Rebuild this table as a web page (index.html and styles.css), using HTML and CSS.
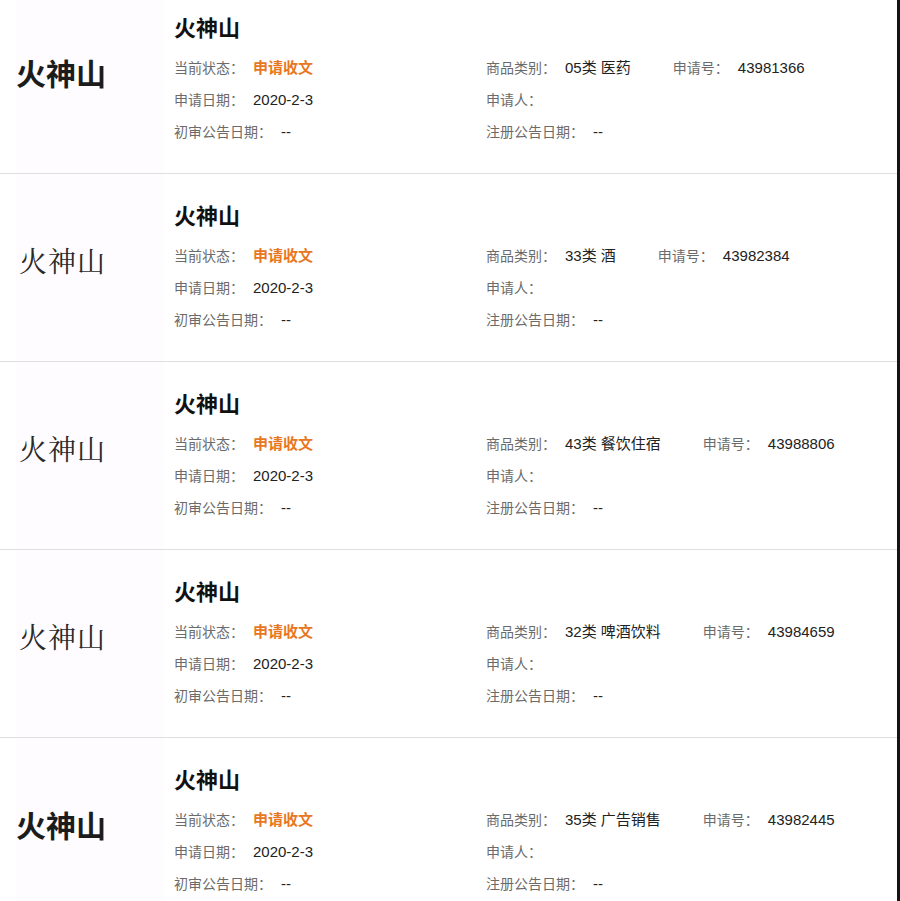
FILE: index.html
```html
<!DOCTYPE html>
<html lang="zh-CN">
<head>
<meta charset="utf-8">
<title>火神山 商标</title>
<link rel="stylesheet" href="styles.css">
</head>
<body>
<div class="list">
  <div class="item">
    <div class="logo"><span class="logo-text sans">火神山</span></div>
    <div class="info">
      <div class="title">火神山</div>
      <div class="grid">
        <div class="line"><span class="label">当前状态：</span><span class="val status">申请收文</span></div>
        <div class="line"><span class="label">商品类别：</span><span class="val cat">05类 医药</span><span class="label">申请号：</span><span class="val">43981366</span></div>
        <div class="line"><span class="label">申请日期：</span><span class="val">2020-2-3</span></div>
        <div class="line"><span class="label">申请人：</span></div>
        <div class="line"><span class="label">初审公告日期：</span><span class="val">--</span></div>
        <div class="line"><span class="label">注册公告日期：</span><span class="val">--</span></div>
      </div>
    </div>
  </div>
  <div class="item">
    <div class="logo"><span class="logo-text serif">火神山</span></div>
    <div class="info">
      <div class="title">火神山</div>
      <div class="grid">
        <div class="line"><span class="label">当前状态：</span><span class="val status">申请收文</span></div>
        <div class="line"><span class="label">商品类别：</span><span class="val cat">33类 酒</span><span class="label">申请号：</span><span class="val">43982384</span></div>
        <div class="line"><span class="label">申请日期：</span><span class="val">2020-2-3</span></div>
        <div class="line"><span class="label">申请人：</span></div>
        <div class="line"><span class="label">初审公告日期：</span><span class="val">--</span></div>
        <div class="line"><span class="label">注册公告日期：</span><span class="val">--</span></div>
      </div>
    </div>
  </div>
  <div class="item">
    <div class="logo"><span class="logo-text serif">火神山</span></div>
    <div class="info">
      <div class="title">火神山</div>
      <div class="grid">
        <div class="line"><span class="label">当前状态：</span><span class="val status">申请收文</span></div>
        <div class="line"><span class="label">商品类别：</span><span class="val cat">43类 餐饮住宿</span><span class="label">申请号：</span><span class="val">43988806</span></div>
        <div class="line"><span class="label">申请日期：</span><span class="val">2020-2-3</span></div>
        <div class="line"><span class="label">申请人：</span></div>
        <div class="line"><span class="label">初审公告日期：</span><span class="val">--</span></div>
        <div class="line"><span class="label">注册公告日期：</span><span class="val">--</span></div>
      </div>
    </div>
  </div>
  <div class="item">
    <div class="logo"><span class="logo-text serif">火神山</span></div>
    <div class="info">
      <div class="title">火神山</div>
      <div class="grid">
        <div class="line"><span class="label">当前状态：</span><span class="val status">申请收文</span></div>
        <div class="line"><span class="label">商品类别：</span><span class="val cat">32类 啤酒饮料</span><span class="label">申请号：</span><span class="val">43984659</span></div>
        <div class="line"><span class="label">申请日期：</span><span class="val">2020-2-3</span></div>
        <div class="line"><span class="label">申请人：</span></div>
        <div class="line"><span class="label">初审公告日期：</span><span class="val">--</span></div>
        <div class="line"><span class="label">注册公告日期：</span><span class="val">--</span></div>
      </div>
    </div>
  </div>
  <div class="item">
    <div class="logo"><span class="logo-text sans">火神山</span></div>
    <div class="info">
      <div class="title">火神山</div>
      <div class="grid">
        <div class="line"><span class="label">当前状态：</span><span class="val status">申请收文</span></div>
        <div class="line"><span class="label">商品类别：</span><span class="val cat">35类 广告销售</span><span class="label">申请号：</span><span class="val">43982445</span></div>
        <div class="line"><span class="label">申请日期：</span><span class="val">2020-2-3</span></div>
        <div class="line"><span class="label">申请人：</span></div>
        <div class="line"><span class="label">初审公告日期：</span><span class="val">--</span></div>
        <div class="line"><span class="label">注册公告日期：</span><span class="val">--</span></div>
      </div>
    </div>
  </div>
</div>
</body>
</html>
```

FILE: styles.css
```css
html, body {
  margin: 0;
  padding: 0;
  background: #ffffff;
  overflow: hidden;
}

body {
  font-family: "Liberation Sans", "Noto Sans CJK SC", sans-serif;
  color: #222;
}

.list {
  width: 897px;
  border-right: 3px solid #141414;
  margin-top: -14px;
}

.item {
  display: flex;
  height: 187px;
  border-bottom: 1px solid #dedede;
}

.logo {
  width: 148px;
  margin-left: 16px;
  margin-right: 10px;
  background: #fefcfe;
  display: flex;
  align-items: flex-start;
}

.logo-text {
  display: block;
  color: #1c1c1c;
  white-space: nowrap;
}

.logo-text.sans {
  font-family: "Noto Sans CJK SC", sans-serif;
  font-weight: 700;
  font-size: 30px;
  line-height: 40px;
  margin-top: 66px;
  letter-spacing: 0;
}

.logo-text.serif {
  font-family: "Noto Serif CJK SC", "AR PL UMing CN", "Noto Sans CJK SC", serif;
  font-weight: 400;
  font-size: 28px;
  line-height: 40px;
  margin-top: 66px;
  margin-left: 3px;
  letter-spacing: 1px;
  color: #2a2a2a;
}

.info {
  flex: 1;
  padding-top: 22px;
}

.title {
  font-family: "Noto Sans CJK SC", sans-serif;
  font-size: 22px;
  font-weight: 700;
  line-height: 36px;
  color: #111;
}

.grid {
  margin-top: 8px;
  display: grid;
  grid-template-columns: 312px auto;
}

.line {
  font-size: 14px;
  line-height: 32px;
  white-space: nowrap;
}

.label {
  color: #6b6b6b;
}

.val {
  color: #222;
  font-size: 15px;
  margin-left: 9px;
}

.val.cat {
  margin-right: 42px;
}

.status {
  color: #e8771f;
  font-weight: 700;
}
```
